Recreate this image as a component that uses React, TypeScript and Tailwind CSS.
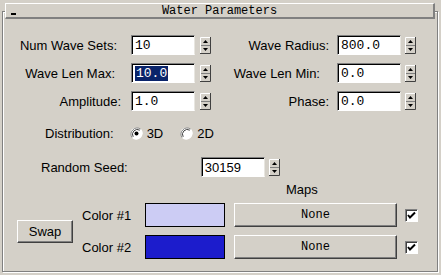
const sans = { fontFamily: "'Liberation Sans', Arial, sans-serif" };

const Spinner = () => (
  <svg width="11" height="17" viewBox="0 0 11 17" className="block shrink-0">
    <rect x="0" y="0" width="11" height="17" fill="#d4d0c8" />
    <path d="M0.5 16 V0.5 H10" stroke="#fff" fill="none" />
    <path d="M0 16.5 H10.5 V0" stroke="#404040" fill="none" />
    <path d="M1 8.5 H10" stroke="#808080" />
    <path d="M3 6 L5.5 3 L8 6 Z" fill="#000" />
    <path d="M3 11 L5.5 14 L8 11 Z" fill="#000" />
  </svg>
);

const Field = ({ value, selected, mono = true, w = 64 }: { value: string; selected?: boolean; mono?: boolean; w?: number }) => (
  <div
    className="h-[20px] bg-white border border-t-[#808080] border-l-[#808080] border-b-white border-r-[#e8e6e0] shadow-[inset_1px_1px_0_#000] flex items-center pl-[3px] pt-[1px] text-[13px] text-black leading-none"
    style={{ width: w }}
  >
    <span
      className={selected ? "bg-[#0a246a] text-white px-[1px] py-[1px]" : ""}
      style={{ fontFamily: mono ? "'Liberation Mono', monospace" : "'Liberation Sans', Arial, sans-serif" }}
    >
      {value}
    </span>
  </div>
);

const Radio = ({ on }: { on?: boolean }) => (
  <svg width="13" height="13" viewBox="0 0 13 13" className="block shrink-0">
    <circle cx="6.5" cy="6.5" r="6" fill="#fff" />
    <path d="M2.3 10.7 A6 6 0 0 1 10.7 2.3" stroke="#808080" fill="none" />
    <path d="M3.2 9.8 A4.8 4.8 0 0 1 9.8 3.2" stroke="#404040" fill="none" />
    <path d="M10.7 2.3 A6 6 0 0 1 2.3 10.7" stroke="#fff" fill="none" />
    {on && <circle cx="6.5" cy="6.5" r="2" fill="#000" />}
  </svg>
);

const Check = () => (
  <div className="w-[13px] h-[13px] bg-white border border-t-[#808080] border-l-[#808080] border-b-white border-r-white shadow-[inset_1px_1px_0_#404040] flex items-center justify-center">
    <svg width="9" height="9" viewBox="0 0 9 9" className="block">
      <path d="M1 4 L3 6.5 L8 1.5" stroke="#000" strokeWidth="2" fill="none" />
    </svg>
  </div>
);

const MapButton = () => (
  <div
    className="w-[163px] h-[24px] bg-[#d4d0c8] border border-t-white border-l-white border-b-[#404040] border-r-[#404040] shadow-[inset_-1px_-1px_0_#808080] flex items-center justify-center text-[12px] text-black"
    style={{ fontFamily: "'Liberation Mono', monospace" }}
  >
    None
  </div>
);

export default function App() {
  return (
    <div className="w-[441px] h-[275px] bg-[#d4d0c8] relative overflow-hidden text-black" style={sans}>
      {/* group frame */}
      <div className="absolute left-[2px] top-[11px] w-[436px] h-[261px] border border-[#808080] shadow-[inset_1px_1px_0_#fff,1px_1px_0_#fff]">
        <div className="flex flex-col text-[13px] leading-none">
          {/* rows of number fields */}
          {[
            ["Num Wave Sets:", 114, 14, "10", false, "Wave Radius:", 112, 8, "800.0"],
            ["Wave Len Max:", 112, 16, "10.0", true, "Wave Len Min:", 103, 17, "0.0"],
            ["Amplitude:", 118, 10, "1.0", false, "Phase:", 112, 8, "0.0"],
          ].map(([l1, w1, g1, v1, sel, l2, w2, g2, v2], i) => (
            <div key={i} className={"flex items-center h-[20px] " + (i === 0 ? "mt-[23px]" : "mt-[8px]")}>
              <div className="flex items-center w-[214px]">
                <span className="text-right" style={{ width: w1 as number }}>{l1}</span>
                <div style={{ marginLeft: g1 as number }}><Field value={v1 as string} selected={sel as boolean} /></div>
                <div className="ml-[5px]"><Spinner /></div>
              </div>
              <div className="flex items-center">
                <span className="text-right" style={{ width: w2 as number }}>{l2}</span>
                <div style={{ marginLeft: g2 as number }}><Field value={v2 as string} /></div>
                <div className="ml-[4px]"><Spinner /></div>
              </div>
            </div>
          ))}

          {/* distribution */}
          <div className="flex items-center h-[16px] mt-[14px] pl-[42px]">
            <span>Distribution:</span>
            <div className="ml-[16px]"><Radio on /></div>
            <span className="ml-[4px]">3D</span>
            <div className="ml-[17px]"><Radio /></div>
            <span className="ml-[4px]">2D</span>
          </div>

          {/* random seed */}
          <div className="flex items-center h-[20px] mt-[16px] pl-[38px]">
            <span>Random Seed:</span>
            <div className="ml-[73px]"><Field value="30159" mono={false} /></div>
            <div className="ml-[4px]"><Spinner /></div>
          </div>

          {/* maps */}
          <div className="h-[15px] mt-[5px] pl-[283px] flex items-center">Maps</div>

          <div className="flex items-center mt-[6px]">
            <div className="ml-[14px] w-[56px] h-[23px] bg-[#d4d0c8] border border-t-white border-l-white border-b-[#404040] border-r-[#404040] shadow-[inset_-1px_-1px_0_#808080] flex items-center justify-center">
              Swap
            </div>
            <div className="flex flex-col gap-[8px] ml-[9px]">
              {["#ccccf4", "#1c1ccc"].map((c, i) => (
                <div key={i} className="flex items-center h-[24px]">
                  <span className="w-[63px]">Color #{i + 1}</span>
                  <div className="w-[80px] h-[24px] border border-black" style={{ background: c }} />
                  <div className="ml-[9px]"><MapButton /></div>
                  <div className="ml-[8px]"><Check /></div>
                </div>
              ))}
            </div>
          </div>
        </div>
      </div>

      {/* title bar */}
      <div className="absolute left-[5px] top-[3px] w-[430px] h-[16px] bg-[#d4d0c8] border-t border-l border-t-white border-l-white border-b-2 border-r-2 border-b-[#808080] border-r-[#808080] flex items-center justify-center">
        <div className="absolute left-[5px] top-[9px] w-[5px] h-[2px] bg-black" />
        <span className="text-[12px] text-black leading-none" style={{ fontFamily: "'Liberation Mono', monospace" }}>
          Water Parameters
        </span>
      </div>
    </div>
  );
}
